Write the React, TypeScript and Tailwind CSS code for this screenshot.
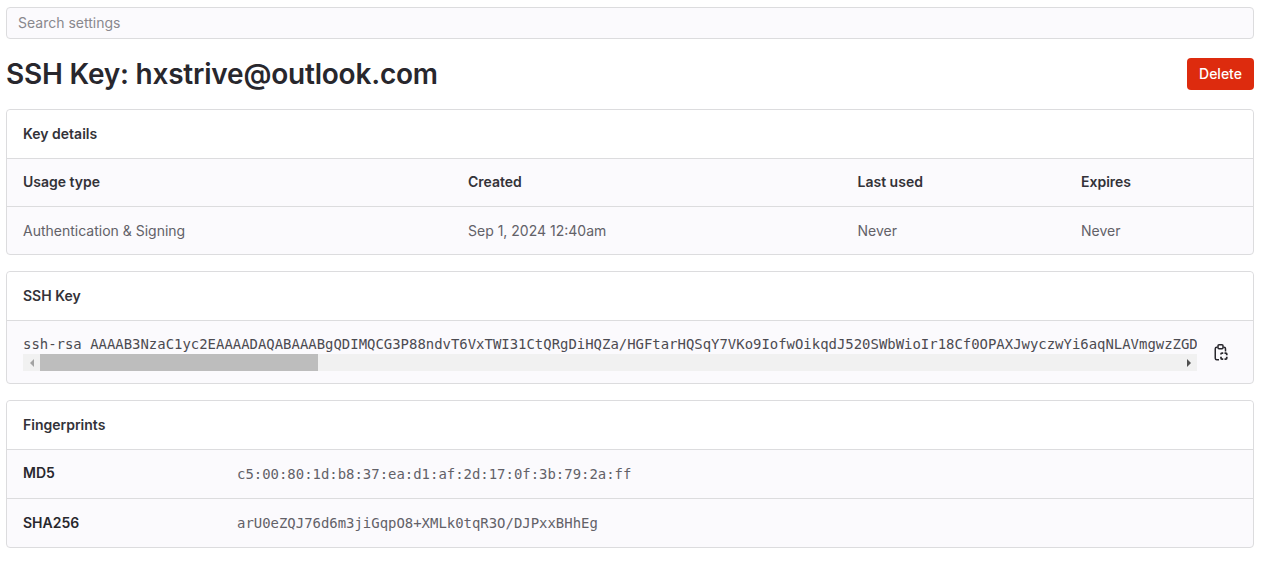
const sans = "font-['Inter','Noto_Sans',sans-serif]";
const mono = "font-['DejaVu_Sans_Mono','Liberation_Mono',monospace] text-[13.95px]";

const sshKey =
  "ssh-rsa AAAAB3NzaC1yc2EAAAADAQABAAABgQDIMQCG3P88ndvT6VxTWI31CtQRgDiHQZa/HGFtarHQSqY7VKo9IofwOikqdJ520SWbWioIr18Cf0OPAXJwyczwYi6aqNLAVmgwzZGD";

function ClipboardIcon() {
  return (
    <svg width="16" height="17" viewBox="0 0 16 17" fill="none" className="text-[#28272d]">
      <path
        d="M4.5 3.25H3.75c-.83 0-1.5.67-1.5 1.5v9.5c0 .83.67 1.5 1.5 1.5H6M10.5 3.25h.5c.83 0 1.5.67 1.5 1.5V7.5"
        stroke="currentColor"
        strokeWidth="1.5"
      />
      <rect x="5" y=".75" width="5" height="4" rx="1" stroke="currentColor" strokeWidth="1.5" />
      <path
        d="M8 10.5V10c0-.55.45-1 1-1h1.25M11.5 9h1.25c.55 0 1 .45 1 1v1.25M13.75 12.75V14c0 .55-.45 1-1 1H11.5M10.25 15H9c-.55 0-1-.45-1-1v-1.25"
        stroke="currentColor"
        strokeWidth="1.75"
      />
    </svg>
  );
}

function CardHeader({ title }: { title: string }) {
  return (
    <div className="h-[49px] px-4 flex items-center bg-white border-b border-[#dcdcde] text-sm font-semibold text-[#333238] rounded-t">
      {title}
    </div>
  );
}

export default function App() {
  return (
    <div className={`min-h-[562px] bg-white px-[6px] pt-[7px] pb-[14px] w-[1260px] ${sans}`}>
      <div className="h-8 px-[11px] flex items-center rounded border border-[#dcdcde] bg-[#fbfafd] text-sm text-[#89888d]">
        Search settings
      </div>

      <div className="flex items-center justify-between mt-[19px] mb-[19px] h-8">
        <h1 className="text-[28px] leading-8 font-semibold tracking-[-0.21px] text-[#28272d]">
          SSH Key: hxstrive@outlook.com
        </h1>
        <button className="h-8 w-[67px] rounded bg-[#dd2b0e] text-sm font-medium text-white">Delete</button>
      </div>

      <section className="rounded border border-[#dcdcde] bg-[#fbfafd]">
        <CardHeader title="Key details" />
        <div className="h-[48px] px-4 pb-[2px] grid grid-cols-[445px_389.5px_223.5px_1fr] items-center border-b border-[#dcdcde] text-sm font-semibold text-[#333238]">
          <span>Usage type</span>
          <span>Created</span>
          <span>Last used</span>
          <span>Expires</span>
        </div>
        <div className="h-[47px] px-4 grid grid-cols-[445px_389.5px_223.5px_1fr] items-center text-sm text-[#626168]">
          <span>Authentication &amp; Signing</span>
          <span>Sep 1, 2024 12:40am</span>
          <span>Never</span>
          <span>Never</span>
        </div>
      </section>

      <section className="mt-4 rounded border border-[#dcdcde] bg-[#fbfafd]">
        <CardHeader title="SSH Key" />
        <div className="h-[62px] pl-4 flex">
          <div className="w-[1174px] pt-[14px]">
            <div className={`h-[19px] leading-[19px] overflow-hidden whitespace-pre text-[#4c4b51] ${mono}`}>{sshKey}</div>
            <div className="h-[17px] flex items-center bg-[#f1f1f1]">
              <span className="w-[17px] flex justify-center">
                <span className="border-y-[4px] border-r-[4px] border-y-transparent border-r-[#a3a3a3]" />
              </span>
              <span className="h-[17px] w-[278px] bg-[#bdbdbd]" />
              <span className="ml-auto w-[17px] flex justify-center">
                <span className="border-y-[4px] border-l-[4px] border-y-transparent border-l-[#505050]" />
              </span>
            </div>
          </div>
          <div className="ml-[16px] pt-[23px]">
            <ClipboardIcon />
          </div>
        </div>
      </section>

      <section className="mt-4 rounded border border-[#dcdcde] bg-[#fbfafd]">
        <CardHeader title="Fingerprints" />
        <div className="h-[49px] px-4 flex items-center border-b border-[#dcdcde]">
          <span className="w-[214px] pb-[2px] text-sm font-semibold text-[#28272d]">MD5</span>
          <span className={`text-[#626168] ${mono}`}>c5:00:80:1d:b8:37:ea:d1:af:2d:17:0f:3b:79:2a:ff</span>
        </div>
        <div className="h-[48px] px-4 flex items-center">
          <span className="w-[214px] text-sm font-semibold text-[#28272d]">SHA256</span>
          <span className={`text-[#626168] ${mono}`}>arU0eZQJ76d6m3jiGqpO8+XMLk0tqR3O/DJPxxBHhEg</span>
        </div>
      </section>
    </div>
  );
}
